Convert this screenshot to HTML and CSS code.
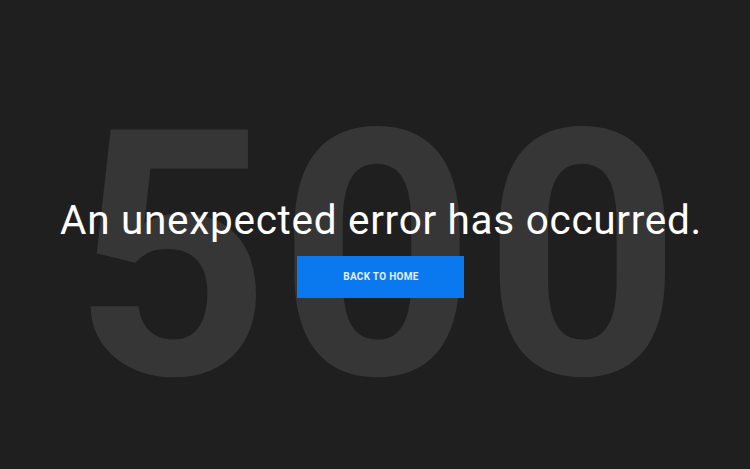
FILE: index.html
```html
<!DOCTYPE html>
<html lang="en">
<head>
  <meta charset="UTF-8"/>
  <meta content="width=device-width, initial-scale=1.0" name="viewport"/>
  <title>500 - Server Error</title>
  <link rel="stylesheet" href="styles.css">
</head>
<body>
<div class="error-page">
  <div class="error-code" aria-hidden="true">500</div>

  <div class="error-content">
    <h1>An unexpected error has occurred.</h1>
    <a class="btn-home" href="/">Back to home</a>
  </div>
</div>
</body>
</html>
```

FILE: styles.css
```css
html, body {
  height: 100%;
}
body {
  font-family: Roboto, 'Noto Sans', sans-serif;
  margin: 0;
  background-color: #1f1f1f;
  color: #fff;
  overflow: hidden;
}
.error-page {
  height: 100%;
  display: grid;
  place-items: center;
  padding-left: 12px;
  box-sizing: border-box;
}
/* code and message share one cell, the code sits underneath */
.error-code,
.error-content {
  grid-area: 1 / 1;
}
.error-code {
  margin-top: 44px;
  font-size: 344px;
  font-weight: 700;
  line-height: 1;
  color: #363636;
  letter-spacing: 8px;
  user-select: none;
}
.error-content {
  display: flex;
  flex-direction: column;
  align-items: center;
  gap: 12px;
  margin-top: 24px;
}
h1 {
  margin: 0;
  font-size: 40.5px;
  font-weight: 400;
  letter-spacing: 0.7px;
  line-height: 48px;
}
.btn-home {
  display: block;
  width: 167px;
  height: 42px;
  line-height: 42px;
  text-align: center;
  background-color: #0a78ef;
  color: #e4eeff;
  font-size: 10px;
  font-weight: 700;
  letter-spacing: 0.3px;
  text-transform: uppercase;
  text-decoration: none;
}
```
